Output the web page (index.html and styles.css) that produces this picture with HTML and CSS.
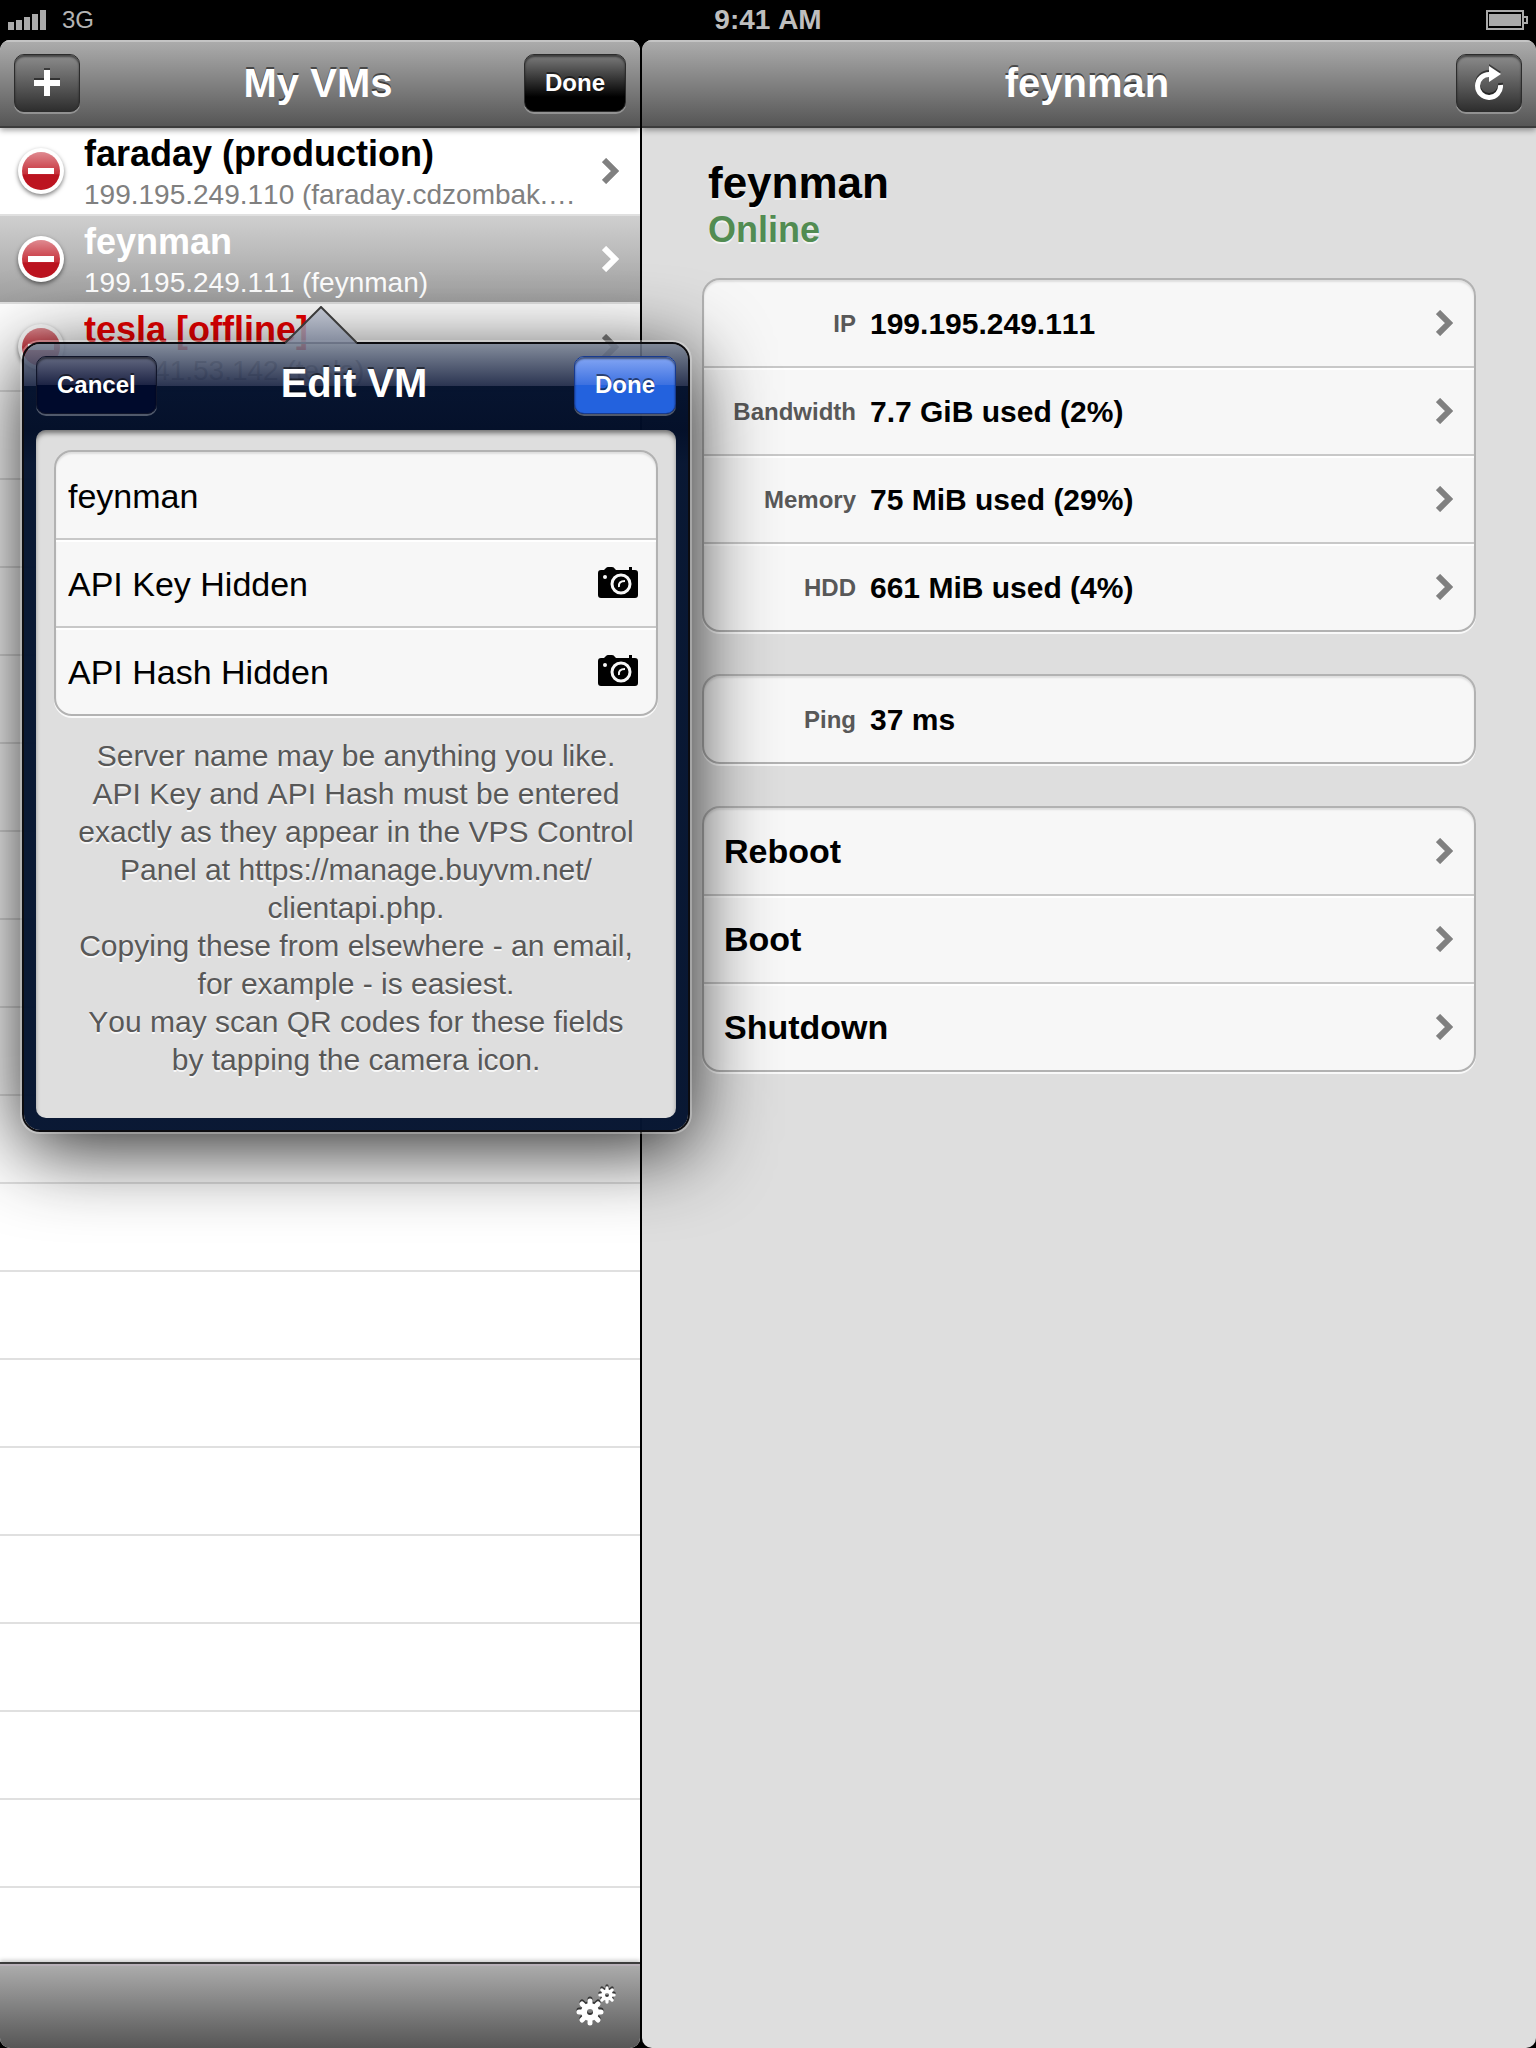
FILE: index.html
```html
<!DOCTYPE html>
<html lang="en">
<head>
<meta charset="utf-8">
<meta name="viewport" content="width=device-width, initial-scale=1">
<title>My VMs</title>
<link rel="stylesheet" href="styles.css">
</head>
<body>
<svg class="defs" width="0" height="0" aria-hidden="true">
  <defs>
    <linearGradient id="red" x1="0" y1="0" x2="0" y2="1">
      <stop offset="0" stop-color="#df8a90"/>
      <stop offset=".58" stop-color="#c6303a"/>
      <stop offset=".6" stop-color="#bb1420"/>
      <stop offset="1" stop-color="#bd1420"/>
    </linearGradient>
    <linearGradient id="tip" x1="0" y1="0" x2="0" y2="1">
      <stop offset="0" stop-color="#b4bac8" stop-opacity=".8"/>
      <stop offset="1" stop-color="#7a8398" stop-opacity=".86"/>
    </linearGradient>
    <symbol id="minus" viewBox="0 0 50 54">
      <circle cx="25" cy="27" r="23" fill="#fff"/>
      <circle cx="25" cy="27" r="19" fill="url(#red)"/>
      <path d="M12 24h26v6H12z" fill="#fff"/>
    </symbol>
    <symbol id="chevron" viewBox="0 0 17 26">
      <path d="M2 2l11 11L2 24" fill="none" stroke="currentColor" stroke-width="6"/>
    </symbol>
    <symbol id="camera" viewBox="0 0 40 32">
      <path d="M3 3H6L8 1Q9 0 10 0H14Q16 0 17 2L18 3H31V0H34V3H37Q40 3 40 6V28Q40 31 37 31H3Q0 31 0 28V6Q0 3 3 3Z" fill="#000"/>
      <circle cx="7" cy="10" r="2" fill="#f7f7f7"/>
      <circle cx="23" cy="17" r="9" fill="none" stroke="#f7f7f7" stroke-width="3"/>
      <path d="M21 20Q20 14 27 14" fill="none" stroke="#f7f7f7" stroke-width="2"/>
    </symbol>
    <symbol id="gear" viewBox="-14 -14 28 28">
      <g stroke="currentColor" stroke-width="5" stroke-linecap="round">
        <path d="M0-11V-7M0 11V7M-11 0H-7M11 0H7M-8-8L-5-5M8 8L5 5M8-8L5-5M-8 8L-5 5"/>
      </g>
      <circle r="6" fill="none" stroke="currentColor" stroke-width="6"/>
    </symbol>
  </defs>
</svg>

<header class="status">
  <div class="carrier">
    <svg width="38" height="20" viewBox="0 0 38 20" aria-hidden="true"><path d="M0 12h6v8H0zM8 10h6v10H8zM16 7h6v13h-6zM24 4h6v16h-6zM32 0h6v20h-6z" fill="#aaa"/></svg>
    <span>3G</span>
  </div>
  <time class="clock">9:41 AM</time>
  <svg class="battery" width="42" height="20" viewBox="0 0 42 20" aria-label="Battery full"><path d="M1 1h36v18H1zM37 7h4v6h-4" fill="none" stroke="#aaa" stroke-width="2"/><path d="M3 4h32v12H3z" fill="#aaa"/></svg>
</header>

<div class="split">
  <section class="pane sidebar">
    <header class="navbar">
      <button class="btn icon-btn" type="button" aria-label="Add VM">
        <svg width="26" height="26" viewBox="0 0 26 26"><path d="M10 0h6v10h10v6H16v10h-6V16H0v-6h10z" fill="#fff"/></svg>
      </button>
      <h1 class="nav-title">My VMs</h1>
      <button class="btn btn-black" type="button">Done</button>
    </header>
    <ul class="vms">
      <li class="vm">
        <button class="delete" type="button" aria-label="Delete faraday"><svg width="50" height="54"><use href="#minus"/></svg></button>
        <a class="vm-link" href="#faraday">
          <span class="vm-text"><span class="vm-name">faraday (production)</span><span class="vm-host">199.195.249.110 (faraday.cdzombak.…</span></span>
          <svg class="chevron" width="17" height="26" aria-hidden="true"><use href="#chevron"/></svg>
        </a>
      </li>
      <li class="vm selected">
        <button class="delete" type="button" aria-label="Delete feynman"><svg width="50" height="54"><use href="#minus"/></svg></button>
        <a class="vm-link" href="#feynman">
          <span class="vm-text"><span class="vm-name">feynman</span><span class="vm-host">199.195.249.111 (feynman)</span></span>
          <svg class="chevron" width="17" height="26" aria-hidden="true"><use href="#chevron"/></svg>
        </a>
      </li>
      <li class="vm offline">
        <button class="delete" type="button" aria-label="Delete tesla"><svg width="50" height="54"><use href="#minus"/></svg></button>
        <a class="vm-link" href="#tesla">
          <span class="vm-text"><span class="vm-name">tesla [offline]</span><span class="vm-host">199.141.53.142 (tesla)</span></span>
          <svg class="chevron" width="17" height="26" aria-hidden="true"><use href="#chevron"/></svg>
        </a>
      </li>
    </ul>
    <footer class="toolbar">
      <button class="gears" type="button" aria-label="Settings">
        <svg width="42" height="44" viewBox="0 0 42 44"><use href="#gear" x="0" y="14" width="28" height="28"/><use href="#gear" x="22" y="2" width="18" height="18"/></svg>
      </button>
    </footer>
  </section>

  <main class="pane detail">
    <header class="navbar">
      <span></span>
      <h2 class="nav-title">feynman</h2>
      <button class="btn icon-btn" type="button" aria-label="Refresh">
        <svg width="28" height="34" viewBox="0 0 28 34"><path d="M15 8.500A11.500 11.500 0 1 0 25.500 19" fill="none" stroke="#fff" stroke-width="5"/><path d="M14 0l12 8-12 8z" fill="#fff"/></svg>
      </button>
    </header>
    <div class="detail-body">
      <div class="heading">
        <h3 class="server">feynman</h3>
        <p class="state">Online</p>
      </div>
      <div class="group">
        <a class="row" href="#ip"><span class="label">IP</span><span class="value">199.195.249.111</span><svg class="chevron" width="17" height="26" aria-hidden="true"><use href="#chevron"/></svg></a>
        <a class="row" href="#bandwidth"><span class="label">Bandwidth</span><span class="value">7.7 GiB used (2%)</span><svg class="chevron" width="17" height="26" aria-hidden="true"><use href="#chevron"/></svg></a>
        <a class="row" href="#memory"><span class="label">Memory</span><span class="value">75 MiB used (29%)</span><svg class="chevron" width="17" height="26" aria-hidden="true"><use href="#chevron"/></svg></a>
        <a class="row" href="#hdd"><span class="label">HDD</span><span class="value">661 MiB used (4%)</span><svg class="chevron" width="17" height="26" aria-hidden="true"><use href="#chevron"/></svg></a>
      </div>
      <div class="group">
        <div class="row"><span class="label">Ping</span><span class="value">37 ms</span></div>
      </div>
      <div class="group">
        <button class="row action" type="button"><span>Reboot</span><svg class="chevron" width="17" height="26" aria-hidden="true"><use href="#chevron"/></svg></button>
        <button class="row action" type="button"><span>Boot</span><svg class="chevron" width="17" height="26" aria-hidden="true"><use href="#chevron"/></svg></button>
        <button class="row action" type="button"><span>Shutdown</span><svg class="chevron" width="17" height="26" aria-hidden="true"><use href="#chevron"/></svg></button>
      </div>
    </div>
  </main>

  <form class="popover" role="dialog" aria-labelledby="edit-title">
    <svg class="arrow" width="72" height="38" viewBox="0 0 72 38" aria-hidden="true"><path d="M0 38L36 2L72 38Z" fill="url(#tip)"/><path d="M0 37L36 1L72 37" fill="none" stroke="#3a3a3a" stroke-width="2"/></svg>
    <div class="popover-bar">
      <button class="btn btn-navy" type="button">Cancel</button>
      <h2 class="nav-title" id="edit-title">Edit VM</h2>
      <button class="btn btn-blue" type="submit">Done</button>
    </div>
    <div class="popover-body">
      <div class="group">
        <div class="field"><input type="text" aria-label="Server name" value="feynman"></div>
        <div class="field"><input type="text" aria-label="API Key" value="API Key Hidden"><button class="scan" type="button" aria-label="Scan API Key"><svg width="40" height="32"><use href="#camera"/></svg></button></div>
        <div class="field"><input type="text" aria-label="API Hash" value="API Hash Hidden"><button class="scan" type="button" aria-label="Scan API Hash"><svg width="40" height="32"><use href="#camera"/></svg></button></div>
      </div>
      <div class="help">
        <p>Server name may be anything you like.</p>
        <p>API Key and API Hash must be entered exactly as they appear in the VPS Control Panel at https://manage.buyvm.net/<wbr>clientapi.php.</p>
        <p>Copying these from elsewhere - an email, for example - is easiest.</p>
        <p>You may scan QR codes for these fields by tapping the camera icon.</p>
      </div>
    </div>
  </form>
</div>
</body>
</html>
```
FILE: styles.css
```css
* { box-sizing: border-box; }

body {
  margin: 0;
  min-height: 100vh;
  display: flex;
  flex-direction: column;
  background: #000;
  color: #000;
  font-family: "Liberation Sans", Arial, Helvetica, sans-serif;
  font-kerning: none;
}

h1, h2, h3, p, ul { margin: 0; padding: 0; }
button, input { font: inherit; font-kerning: none; color: inherit; border: 0; background: none; padding: 0; }
a { color: inherit; text-decoration: none; }
svg { display: block; flex: none; }
.defs { position: absolute; }

/* Status bar */
.status {
  height: 40px;
  padding: 0 8px;
  display: grid;
  grid-template-columns: 1fr auto 1fr;
  align-items: center;
  color: #b4b4b4;
}
.carrier { display: flex; align-items: center; gap: 16px; font-size: 24px; }
.clock { font-size: 28px; font-weight: bold; color: #bebebe; }
.battery { justify-self: end; }

/* Split view */
.split {
  position: relative;
  flex: 1;
  display: flex;
  gap: 2px;
}
.pane {
  display: flex;
  flex-direction: column;
  border-radius: 10px;
  overflow: hidden;
}
.sidebar { flex: 0 0 640px; background: #fff; }
.detail { flex: 1; min-width: 0; background: #dedede; }

.navbar {
  position: relative;
  display: grid;
  grid-template-columns: 1fr auto 1fr;
  align-items: center;
  height: 88px;
  padding: 0 14px;
  border-bottom: 2px solid #3c3c3c;
  background: linear-gradient(#adadad, #565656);
  box-shadow: inset 0 2px 0 #c4c4c4, 0 2px 6px rgba(0, 0, 0, .4);
  color: #fff;
}
.nav-title {
  margin-right: 4px;
  font-size: 40px;
  line-height: 46px;
  font-weight: bold;
  color: #fff;
  text-shadow: 0 -2px 0 rgba(0, 0, 0, .5);
}

.btn {
  justify-self: start;
  display: flex;
  align-items: center;
  justify-content: center;
  height: 58px;
  padding: 0 20px;
  border: 1px solid #2c2c2c;
  border-radius: 10px;
  background: linear-gradient(#8c8c8c, #2e2e2e);
  box-shadow: inset 0 2px 2px rgba(0, 0, 0, .5), 0 2px 0 rgba(255, 255, 255, .3);
  color: #fff;
  font-size: 24px;
  font-weight: bold;
  text-shadow: 0 -2px 0 rgba(0, 0, 0, .5);
}
.btn:last-child { justify-self: end; }
.btn svg { filter: drop-shadow(0 -2px 0 rgba(0, 0, 0, .5)); }
.icon-btn { width: 66px; padding: 0; }
.btn-black { background: linear-gradient(#7c7c7c, #000 75%); }
.btn-navy {
  border-color: #10152a;
  background: linear-gradient(#626880, #1c2344 50%, #000a2c 50%, #000a2c);
}
.btn-blue {
  border-color: #173a90;
  background: linear-gradient(#84a6f4, #3c70e0 50%, #2362de 50%, #2362de);
}

/* VM list */
.vms {
  flex: 1;
  list-style: none;
  background: repeating-linear-gradient(#fff 0 86px, #e0e0e0 86px 88px);
}
.vm {
  display: flex;
  align-items: center;
  height: 88px;
  padding: 0 21px 0 16px;
  border-bottom: 2px solid #e0e0e0;
}
.delete svg { filter: drop-shadow(0 2px 2px rgba(0, 0, 0, .5)); }
.vm-link {
  flex: 1;
  min-width: 0;
  display: flex;
  align-items: center;
  gap: 18px;
  margin-left: 18px;
}
.vm-text { flex: 1; min-width: 0; padding-top: 6px; }
.vm-name, .vm-host {
  display: block;
  overflow: hidden;
  white-space: nowrap;
  text-overflow: ellipsis;
}
.vm-name { font-size: 36px; line-height: 42px; font-weight: bold; }
.vm-host { font-size: 28px; line-height: 40px; color: #808080; }
.chevron { color: #808080; }
.selected {
  background: linear-gradient(#cfcfcf, #a0a0a0);
  color: #fff;
}
.selected .vm-host, .selected .chevron { color: #fff; }
.offline .vm-name { color: #f00000; }

.toolbar {
  position: relative;
  display: flex;
  align-items: center;
  justify-content: flex-end;
  height: 86px;
  padding: 0 22px;
  border-top: 2px solid #3c3c3c;
  background: linear-gradient(#adadad, #565656);
  box-shadow: inset 0 2px 0 #b8b0b8, 0 -2px 4px rgba(0, 0, 0, .2);
}
.gears { color: #fff; }
.gears svg { filter: drop-shadow(0 -2px 0 rgba(0, 0, 0, .6)); }

/* Detail pane */
.detail-body {
  display: flex;
  flex-direction: column;
  gap: 42px;
  padding: 30px 60px;
}
.heading {
  margin-bottom: -16px;
  padding: 0 6px;
  font-weight: bold;
  text-shadow: 0 2px 0 rgba(255, 255, 255, .7);
}
.server { font-size: 44px; line-height: 50px; }
.state { font-size: 36px; line-height: 44px; color: #528c52; }

.group {
  border: 2px solid #b2b2b2;
  border-radius: 18px;
  background: #f7f7f7;
  box-shadow: inset 0 2px 2px rgba(0, 0, 0, .1), 0 2px 0 rgba(255, 255, 255, .8);
}
.row, .field {
  display: flex;
  align-items: center;
  width: 100%;
  height: 86px;
}
.row + .row, .field + .field {
  height: 88px;
  border-top: 2px solid #c8c8c8;
  box-shadow: inset 0 2px 0 #fff;
}
.row { gap: 14px; padding-right: 21px; }
.row .chevron { margin-left: auto; }
.label, .value { padding-top: 2px; font-weight: bold; }
.label {
  width: 152px;
  text-align: right;
  font-size: 24px;
  color: #585858;
}
.value { font-size: 30px; }
.action { padding-left: 20px; font-size: 34px; font-weight: bold; }

/* Edit popover, floating over both panes */
.popover {
  position: absolute;
  top: 302px;
  left: 22px;
  width: 668px;
  padding: 0 12px 12px;
  border: 2px solid #0c0c10;
  border-radius: 18px;
  background: linear-gradient(rgba(114, 124, 142, .88), rgba(34, 44, 74, .96) 42px, rgba(2, 16, 44, .98) 42px, rgba(0, 12, 38, .98) 86px, rgba(5, 20, 48, .98) 120px);
  background-clip: padding-box;
  box-shadow: 0 0 0 2px rgba(255, 255, 255, .3), 0 16px 80px rgba(0, 0, 0, .87);
}
.arrow { position: absolute; left: 261px; top: -38px; }
.popover-bar {
  display: grid;
  grid-template-columns: 1fr auto 1fr;
  align-items: center;
  padding: 12px 0 16px;
}
.popover-bar .nav-title { padding-bottom: 4px; }
.popover-body {
  padding: 20px 18px 39px;
  border-radius: 10px;
  background: #dedede;
  box-shadow: inset 0 4px 5px -1px rgba(0, 0, 0, .5);
}
.field { padding: 0 18px 0 12px; }
.field input { flex: 1; min-width: 0; height: 80px; padding-top: 2px; font-size: 34px; outline: 0; }
.help {
  padding: 21px 18px 0;
  text-align: center;
  font-size: 30px;
  line-height: 38px;
  color: #585858;
  text-shadow: 0 2px 0 rgba(255, 255, 255, .8);
}
```
